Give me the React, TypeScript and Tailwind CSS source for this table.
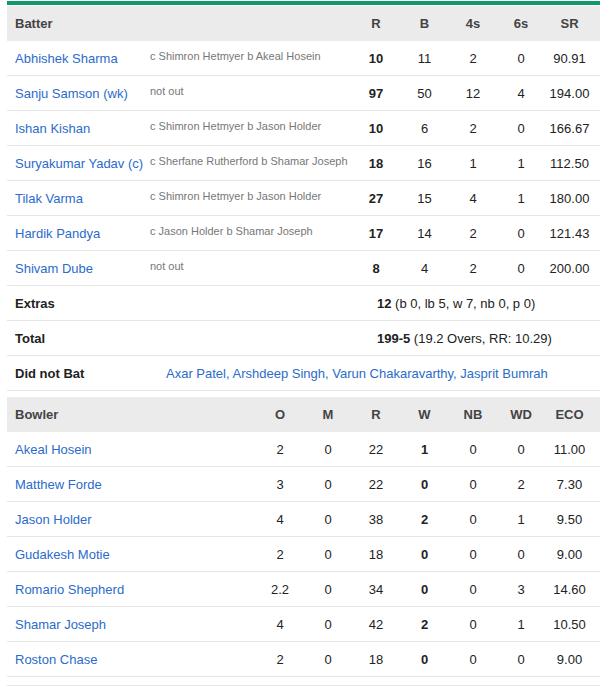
import React from 'react'

type Batter = { name: string; how: string; r: number; b: number; f: number; s: number; sr: string }
type Bowler = { name: string; o: string; m: number; r: number; w: number; nb: number; wd: number; eco: string }

const batters: Batter[] = [
  { name: 'Abhishek Sharma', how: 'c Shimron Hetmyer b Akeal Hosein', r: 10, b: 11, f: 2, s: 0, sr: '90.91' },
  { name: 'Sanju Samson (wk)', how: 'not out', r: 97, b: 50, f: 12, s: 4, sr: '194.00' },
  { name: 'Ishan Kishan', how: 'c Shimron Hetmyer b Jason Holder', r: 10, b: 6, f: 2, s: 0, sr: '166.67' },
  { name: 'Suryakumar Yadav (c)', how: 'c Sherfane Rutherford b Shamar Joseph', r: 18, b: 16, f: 1, s: 1, sr: '112.50' },
  { name: 'Tilak Varma', how: 'c Shimron Hetmyer b Jason Holder', r: 27, b: 15, f: 4, s: 1, sr: '180.00' },
  { name: 'Hardik Pandya', how: 'c Jason Holder b Shamar Joseph', r: 17, b: 14, f: 2, s: 0, sr: '121.43' },
  { name: 'Shivam Dube', how: 'not out', r: 8, b: 4, f: 2, s: 0, sr: '200.00' },
]

const bowlers: Bowler[] = [
  { name: 'Akeal Hosein', o: '2', m: 0, r: 22, w: 1, nb: 0, wd: 0, eco: '11.00' },
  { name: 'Matthew Forde', o: '3', m: 0, r: 22, w: 0, nb: 0, wd: 2, eco: '7.30' },
  { name: 'Jason Holder', o: '4', m: 0, r: 38, w: 2, nb: 0, wd: 1, eco: '9.50' },
  { name: 'Gudakesh Motie', o: '2', m: 0, r: 18, w: 0, nb: 0, wd: 0, eco: '9.00' },
  { name: 'Romario Shepherd', o: '2.2', m: 0, r: 34, w: 0, nb: 0, wd: 3, eco: '14.60' },
  { name: 'Shamar Joseph', o: '4', m: 0, r: 42, w: 2, nb: 0, wd: 1, eco: '10.50' },
  { name: 'Roston Chase', o: '2', m: 0, r: 18, w: 0, nb: 0, wd: 0, eco: '9.00' },
]

const batGrid = 'grid grid-cols-[135px_202px_48px_49px_48px_48px_49px] pl-2 pr-1.5 items-center'
const bowlGrid = 'grid grid-cols-[241px_48px_48px_48px_49px_48px_48px_49px] pl-2 pr-1.5 items-center'
const row = 'h-[35px] pt-px border-b border-[#e6e6e6]'

export default function App() {
  return (
    <div className="bg-white min-h-[687px] pl-[7px] pt-px text-[13px] text-[#222]" style={{ fontFamily: '"Liberation Sans", Arial, sans-serif' }}>
      <div className="border-t-4 border-[#109a6b] pt-px">
        <div className={`${batGrid} h-[35px] bg-[#ebebeb] font-bold text-[#444]`}>
          <div>Batter</div>
          <div />
          <div className="text-center">R</div>
          <div className="text-center">B</div>
          <div className="text-center">4s</div>
          <div className="text-center">6s</div>
          <div className="text-center">SR</div>
        </div>

        {batters.map((b) => (
          <div key={b.name} className={`${batGrid} ${row}`}>
            <div className="text-[#2b6bcb] whitespace-nowrap">{b.name}</div>
            <div className="text-[11px] text-[#777] pb-1 whitespace-nowrap">{b.how}</div>
            <div className="text-center font-bold">{b.r}</div>
            <div className="text-center">{b.b}</div>
            <div className="text-center">{b.f}</div>
            <div className="text-center">{b.s}</div>
            <div className="text-center">{b.sr}</div>
          </div>
        ))}

        <div className={`flex items-center pl-2 ${row}`}>
          <div className="w-[362px] font-bold">Extras</div>
          <div>
            <span className="font-bold">12</span> (b 0, lb 5, w 7, nb 0, p 0)
          </div>
        </div>
        <div className={`flex items-center pl-2 ${row}`}>
          <div className="w-[362px] font-bold">Total</div>
          <div>
            <span className="font-bold">199-5</span> (19.2 Overs, RR: 10.29)
          </div>
        </div>
        <div className={`flex items-center pl-2 ${row}`}>
          <div className="w-[151px] font-bold">Did not Bat</div>
          <div className="text-[#2b6bcb] whitespace-nowrap">Axar Patel, Arshdeep Singh, Varun Chakaravarthy, Jasprit Bumrah</div>
        </div>

        <div className={`${bowlGrid} mt-[6px] h-[35px] bg-[#ebebeb] font-bold text-[#444]`}>
          <div>Bowler</div>
          <div className="text-center">O</div>
          <div className="text-center">M</div>
          <div className="text-center">R</div>
          <div className="text-center">W</div>
          <div className="text-center">NB</div>
          <div className="text-center">WD</div>
          <div className="text-center">ECO</div>
        </div>

        {bowlers.map((b) => (
          <div key={b.name} className={`${bowlGrid} ${row}`}>
            <div className="text-[#2b6bcb]">{b.name}</div>
            <div className="text-center">{b.o}</div>
            <div className="text-center">{b.m}</div>
            <div className="text-center">{b.r}</div>
            <div className="text-center font-bold">{b.w}</div>
            <div className="text-center">{b.nb}</div>
            <div className="text-center">{b.wd}</div>
            <div className="text-center">{b.eco}</div>
          </div>
        ))}

        <div className="mt-2 h-[4px] border-t border-[#e6e6e6]" />
      </div>
    </div>
  )
}
